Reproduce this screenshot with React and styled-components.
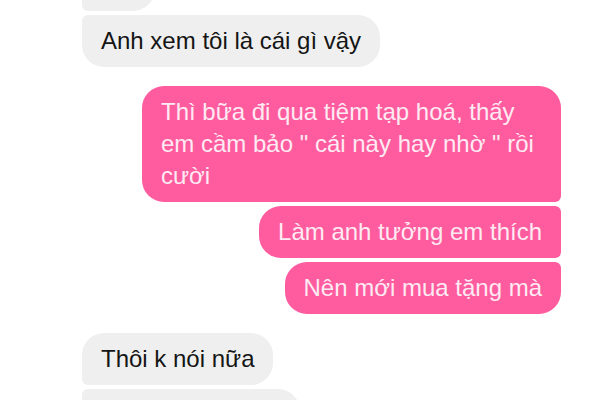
import React from 'react'
import styled, { createGlobalStyle } from 'styled-components'

const Global = createGlobalStyle`
  html, body {
    margin: 0;
    padding: 0;
    background: #ffffff;
  }
  body {
    font-family: "Liberation Sans", Arial, sans-serif;
  }
`

const Screen = styled.div`
  width: 600px;
  height: 400px;
  overflow: hidden;
  background: #ffffff;
`

const Thread = styled.div`
  display: flex;
  flex-direction: column;
  gap: 19px;
  margin-top: -41px;
  padding: 0 39px 0 82px;
`

const Group = styled.div`
  display: flex;
  flex-direction: column;
  gap: 4px;
  align-items: ${(p) => (p.mine ? 'flex-end' : 'flex-start')};
`

const BIG = 22
const SMALL = 6

// radius per position in a run of messages from one side
const corners = (mine, pos) => {
  const top = pos === 'first' || pos === 'single' ? BIG : SMALL
  const bottom = pos === 'last' || pos === 'single' ? BIG : SMALL
  if (mine) return `${BIG}px ${top}px ${bottom}px ${BIG}px`
  return `${top}px ${BIG}px ${BIG}px ${bottom}px`
}

const Bubble = styled.div`
  box-sizing: border-box;
  max-width: 419px;
  min-height: 52px;
  padding: 10px 19px;
  font-size: 24px;
  line-height: 32px;
  border-radius: ${(p) => corners(p.mine, p.pos)};
  background: ${(p) => (p.mine ? '#fe5c9e' : '#efefef')};
  color: ${(p) => (p.mine ? '#feeaf3' : '#151515')};
  ${(p) => p.w && `width: ${p.w}px;`}
`

export default function App() {
  return (
    <Screen>
      <Global />
      <Thread>
        <Group>
          <Bubble pos="first" w={73} />
          <Bubble pos="last">Anh xem tôi là cái gì vậy</Bubble>
        </Group>
        <Group mine>
          <Bubble mine pos="first">
            Thì bữa đi qua tiệm tạp hoá, thấy em cầm bảo " cái này hay nhờ " rồi cười
          </Bubble>
          <Bubble mine pos="middle">Làm anh tưởng em thích</Bubble>
          <Bubble mine pos="last">Nên mới mua tặng mà</Bubble>
        </Group>
        <Group>
          <Bubble pos="first">Thôi k nói nữa</Bubble>
          <Bubble pos="middle" w={218} />
        </Group>
      </Thread>
    </Screen>
  )
}
